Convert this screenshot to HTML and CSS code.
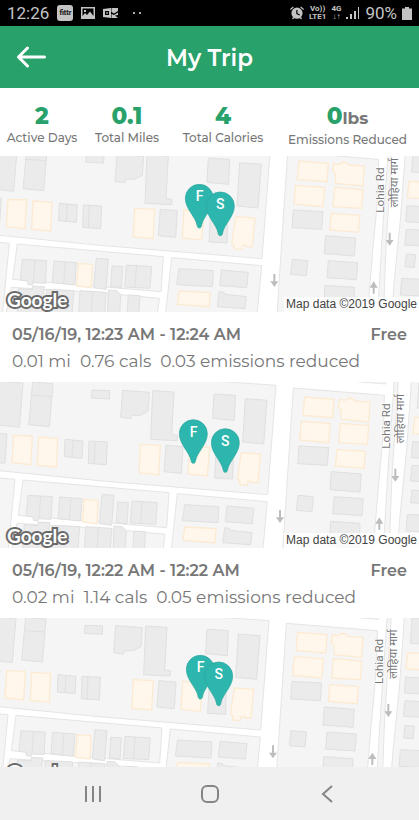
FILE: index.html
```html
<!DOCTYPE html>
<html lang="en">
<head>
<meta charset="utf-8">
<meta name="viewport" content="width=device-width, initial-scale=1">
<title>My Trip</title>
<link rel="stylesheet" href="styles.css">
</head>
<body>

<!-- Shared drawings: street map and pin -->
<svg class="defs" width="0" height="0" aria-hidden="true">
  <symbol id="pin" overflow="visible">
    <path class="pin-shape" d="M0 0C-5 0-6-3-7-9C-11-33-42-57-42-89A42 42 0 0 1 42-89C42-57 11-33 7-9C6-3 5 0 0 0Z"/>
  </symbol>
  <symbol id="streets" overflow="visible">
    <g class="block">
      <path d="M-40-20H640L640-2L811 10L786 338L630 325L300 298L0 268L-40 265Z"/>
      <path d="M863 18L1136 40Q1134 170 1122 272Q1112 380 1102 520H830Z"/>
      <path d="M940-10L1140 6V-10Z"/>
      <path d="M1166-6H1178L1158 300L1150 520H1132L1146 280Z"/>
      <path d="M1218-10L1202 212L1182 412L1174 520H1320V-10Z"/>
      <path d="M-40 286L28 292L6 520H-40Z"/>
      <path d="M52 294L490 332L483 437L38 400Z"/>
      <path d="M34 424L300 440L478 457L470 520H14Z"/>
      <path d="M515 335L785 359L770 520H495Z"/>
    </g>
    <g transform="translate(0 12)">
      <g class="house">
        <path d="M-30-14L52-9L41 124L-30 116ZM81-12L142-7L131 122L69 116ZM78 28L138 32"/>
        <path d="M259 12L312 14L311 39L257 36ZM351 13L431 19L427 76L404 88L377 88L375 98L345 94Z"/>
        <path d="M441 14L505 18L498 146L516 148L514 164L435 160Z"/>
        <path d="M-20 141L4 144L-2 231H-20Z"/>
        <path d="M178 160L232 165L229 217L176 212ZM202 162L199 215"/>
        <path d="M250 165L305 168L302 236L248 232ZM268 166L265 233"/>
        <path d="M481 178L532 182L527 262L475 257Z"/>
        <path d="M67 328L140 332L136 400L98 398L97 405L83 403V393L61 390ZM105 330L100 398"/>
        <path d="M162 333L229 338L224 405L157 398ZM196 335L191 402"/>
        <path d="M289 325L325 328L318 418L281 413ZM336 348L368 350L364 413L332 410Z"/>
        <path d="M379 345L455 350L450 415L374 411ZM410 347L404 413"/>
        <path d="M98 408L133 410L130 430L124 510H50L56 416L97 419Z"/>
        <path d="M140 418L222 422L215 510H135ZM240 422L318 427L313 510H235ZM278 424L273 510"/>
        <path d="M325 420L350 422L362 435L358 510H322ZM385 435L420 437L415 510H380Z"/>
        <path d="M537 356L640 362L637 410L530 404Z"/>
      </g>
      <g class="shop">
        <path d="M24 148L80 150L75 236L19 230ZM99 153L156 157L152 243L95 238Z"/>
        <path d="M404 175L464 178L459 266L400 261ZM552 180L612 184L605 270L547 264Z"/>
        <path d="M235 340L277 343L274 413L230 408ZM537 423L631 428L628 470L532 463Z"/>
      </g>
    </g>
    <g transform="translate(627 12)">
      <g class="house">
        <path d="M-2 24L62 28L59 103L-6 97ZM92 38L157 43L147 174L84 168ZM4 201L56 204L54 279L0 276Z"/>
        <path d="M37 360L118 367L113 413L32 407ZM30 425L45 427L47 433L112 440L108 476L25 470Z"/>
        <path d="M253 180L342 185L338 238L249 233ZM350 257L440 264L436 318L346 311Z"/>
        <path d="M250 328L296 332L292 377L245 373ZM358 332L446 338L442 389L354 383ZM348 406L436 412L434 486L344 480Z"/>
        <path d="M613-10H680V70L608 66ZM594 167L680 172V220L590 215ZM592 238L680 243V290L587 285Z"/>
        <path d="M592 312L620 314L616 352L588 350ZM578 385L680 390V440L574 435Z"/>
      </g>
      <g class="shop">
        <path d="M80 200L138 204L130 290L112 290L111 286L100 286L98 298L75 296V283L68 280Z"/>
        <path d="M270 33L358 40L354 95L265 88ZM260 106L347 112L342 170L255 162Z"/>
        <path d="M375 40L392 43Q400 32 416 40L420 45L466 48L462 108L380 100L378 68L370 65Z"/>
        <path d="M377 112L462 119L458 175L372 170ZM367 190L452 196L448 247L362 240ZM600 94L680 97V148L595 143Z"/>
      </g>
      <g class="direction">
        <path d="M193 372H199V394H208L196 411L184 394H193Z"/>
        <path d="M539 248H545V270H554L542 287L530 270H539Z"/>
        <path d="M491 431H497V413H506L494 394L482 413H491Z"/>
      </g>
      <text class="road" transform="translate(525 188) rotate(-90)">Lohia Rd</text>
      <text class="road" transform="translate(568 172) rotate(-90)">लोहिया मार्ग</text>
    </g>
  </symbol>
</svg>

<div class="status-bar">
  <div class="status-side">
    <span class="clock">12:26</span>
    <span class="app-badge">fittr</span>
    <svg class="status-icon" width="14" height="12" viewBox="0 0 14 12" aria-hidden="true"><path fill-rule="evenodd" d="M0 0H14V12H0ZM1.500 1.500V9L4 6L6 8L9 4.500L12.500 9V1.500ZM3 3H5V5H3Z"/></svg>
    <svg class="status-icon" width="16" height="12" viewBox="0 0 16 12" aria-hidden="true"><path fill-rule="evenodd" d="M0 2L8 1V11L0 10ZM2 4V8H6V4ZM3.200 5.200H4.800V6.800H3.200Z"/><path d="M8.500 1H15V4L11 6.500L8.500 5ZM8.500 7L11 8L15 5.500V8L12 8.500L15 11H8.500Z"/></svg>
    <span class="dots" aria-hidden="true"><i></i><i></i></span>
  </div>
  <div class="status-side right">
    <svg class="status-icon" width="14" height="14" viewBox="0 0 14 14" aria-hidden="true"><path fill-rule="evenodd" d="M7 1.600A5.600 5.600 0 1 1 7 12.800A5.600 5.600 0 0 1 7 1.600ZM6.300 4V8L9.500 9.500L10 8.500L7.500 7.200V4Z"/><path d="M0 3L3 .5L3.700 1.400L.8 4ZM14 3L11 .5L10.300 1.400L13.200 4ZM2 12L3.500 11L4.300 12L2.800 13.500ZM12 12L10.500 11L9.700 12L11.200 13.500Z"/></svg>
    <span class="network"><span>Vo))</span><span>LTE1</span></span>
    <span class="network"><span>4G</span><span>↓↑</span></span>
    <svg class="status-icon" width="14" height="12" viewBox="0 0 14 12" aria-hidden="true"><path d="M0 10H2V12H0ZM4 7H6V12H4ZM8 4H10V12H8ZM12 0H13V12H12Z"/></svg>
    <span class="charge">90%</span>
    <svg class="status-icon" width="10" height="13" viewBox="0 0 10 13" aria-hidden="true"><path d="M3 0H7V1.500H10V13H0V1.500H3Z"/></svg>
  </div>
</div>

<header class="app-bar">
  <button class="back" type="button" aria-label="Back">
    <svg width="30" height="22" viewBox="0 0 30 22" aria-hidden="true"><path d="M28.500 11H3M11.500 2L2.500 11L11.500 20"/></svg>
  </button>
  <h1>My Trip</h1>
</header>

<dl class="stats">
  <div><dt>Active Days</dt><dd>2</dd></div>
  <div><dt>Total Miles</dt><dd>0.1</dd></div>
  <div><dt>Total Calories</dt><dd>4</dd></div>
  <div><dt>Emissions Reduced</dt><dd>0<small>lbs</small></dd></div>
</dl>

<main class="trips">
  <article class="trip">
    <div class="map">
      <svg viewBox="0 0 1257 498" preserveAspectRatio="xMidYMid slice" aria-hidden="true">
        <use href="#streets"/>
        <use href="#pin" x="598" y="246"/><text class="pin-letter" x="599" y="166">F</text>
        <use href="#pin" x="661" y="269"/><text class="pin-letter" x="661" y="189">S</text>
      </svg>
      <span class="brand">Google</span>
      <span class="credit">Map data ©2019 Google</span>
    </div>
    <div class="summary">
      <h2>05/16/19, 12:23 AM - 12:24 AM</h2><strong>Free</strong>
      <p><span>0.01 mi</span><span>0.76 cals</span><span>0.03 emissions reduced</span></p>
    </div>
  </article>

  <article class="trip">
    <div class="map">
      <svg viewBox="0 0 1257 498" preserveAspectRatio="xMidYMid slice" aria-hidden="true">
        <use href="#streets" x="17"/>
        <use href="#pin" x="580" y="244"/><text class="pin-letter" x="581" y="164">F</text>
        <use href="#pin" x="676" y="271"/><text class="pin-letter" x="676" y="191">S</text>
      </svg>
      <span class="brand">Google</span>
      <span class="credit">Map data ©2019 Google</span>
    </div>
    <div class="summary">
      <h2>05/16/19, 12:22 AM - 12:22 AM</h2><strong>Free</strong>
      <p><span>0.02 mi</span><span>1.14 cals</span><span>0.05 emissions reduced</span></p>
    </div>
  </article>

  <article class="trip">
    <div class="map">
      <svg viewBox="0 0 1257 498" preserveAspectRatio="xMidYMid slice" aria-hidden="true">
        <use href="#streets" x="-4" y="-2"/>
        <use href="#pin" x="601" y="243"/><text class="pin-letter" x="602" y="163">F</text>
        <use href="#pin" x="656" y="263"/><text class="pin-letter" x="656" y="183">S</text>
      </svg>
      <span class="brand">Google</span>
      <span class="credit">Map data ©2019 Google</span>
    </div>
  </article>
</main>

<nav class="system-nav">
  <button type="button" aria-label="Recent apps"><svg width="20" height="20" viewBox="0 0 20 20" aria-hidden="true"><path d="M3 2V18M10 2V18M17 2V18"/></svg></button>
  <button type="button" aria-label="Home"><svg width="20" height="20" viewBox="0 0 20 20" aria-hidden="true"><rect x="2" y="2" width="16" height="16" rx="5"/></svg></button>
  <button type="button" aria-label="Go back"><svg width="20" height="20" viewBox="0 0 20 20" aria-hidden="true"><path d="M15 2L6 10L15 18"/></svg></button>
</nav>

</body>
</html>
```
FILE: styles.css
```css
* { box-sizing: border-box; }

body {
  margin: 0;
  height: 100vh;
  display: flex;
  flex-direction: column;
  overflow: hidden;
  background: #fff;
  color: #777;
  font-family: Montserrat, Inter, sans-serif;
}

h1, h2, p, dl, dd { margin: 0; }

button {
  padding: 0;
  border: 0;
  background: none;
  display: grid;
  place-items: center;
}

.defs { position: absolute; }

/* Status bar */
.status-bar {
  flex: none;
  height: 26px;
  padding: 0 7px;
  display: flex;
  justify-content: space-between;
  background: #000;
  color: #c4c4c4;
  font-family: Roboto, sans-serif;
  font-size: 17px;
}
.status-side { display: flex; align-items: center; gap: 8px; }
.status-side.right { gap: 5px; }
.status-icon { fill: currentColor; }
.app-badge {
  width: 16px;
  height: 16px;
  border-radius: 3px;
  background: #c4c4c4;
  color: #222;
  font-size: 7px;
  font-weight: 900;
  line-height: 16px;
  text-align: center;
}
.dots { display: flex; gap: 4px; padding-left: 6px; }
.dots i { width: 2px; height: 2px; background: #aaa; }
.network {
  display: grid;
  font-size: 8px;
  font-weight: 700;
  line-height: 8px;
  text-align: center;
}

/* Title bar */
.app-bar {
  flex: none;
  height: 62px;
  padding: 0 16px;
  display: grid;
  grid-template-columns: 30px 1fr 30px;
  align-items: center;
  background: #29a16b;
  color: #fff;
}
.app-bar h1 {
  padding-top: 2px;
  font-size: 23px;
  font-weight: 600;
  line-height: 28px;
  text-align: center;
}
.back svg {
  fill: none;
  stroke: #fff;
  stroke-width: 3;
  stroke-linecap: round;
  stroke-linejoin: round;
}

/* Totals */
.stats {
  flex: none;
  height: 68px;
  padding-top: 14px;
  display: grid;
  grid-template-columns: 84fr 86fr 106fr 143fr;
  text-align: center;
}
.stats div { display: flex; flex-direction: column-reverse; justify-content: flex-end; }
.stats dt { font-size: 12px; font-weight: 500; line-height: 16px; white-space: nowrap; }
.stats dd { color: #29a16b; font-size: 23px; font-weight: 800; line-height: 28px; }
.stats small { color: #777; font-size: 17px; font-weight: 700; }

/* Trip list, scrolled slightly under the totals */
.trips { flex: 1; min-height: 0; overflow: hidden; }
.trip:first-child { margin-top: -10px; }

.map { position: relative; height: 166px; overflow: hidden; background: #fff; }
.map > svg { display: block; width: 100%; height: 100%; }
.block { fill: #f5f5f5; stroke: #e5e5e5; stroke-width: 3; }
.house { fill: #ebebeb; stroke: #e0e0e0; stroke-width: 3; }
.shop { fill: #fff7eb; stroke: #fcead2; stroke-width: 4; }
.direction { fill: #bdbdbd; }
.road {
  fill: #777;
  stroke: #fff;
  stroke-width: 4;
  paint-order: stroke;
  font-family: Roboto, "Noto Sans Devanagari", "Noto Sans", sans-serif;
  font-size: 35px;
}
.pin-shape { fill: #2db6ad; stroke: #2aa59d; stroke-width: 2; }
.pin-letter {
  fill: #fff;
  font-family: Roboto, sans-serif;
  font-size: 42px;
  font-weight: 500;
  text-anchor: middle;
}
.brand {
  position: absolute;
  left: 7px;
  bottom: 0;
  color: #fff;
  font-family: Lato, sans-serif;
  font-size: 19px;
  font-weight: 700;
  line-height: 24px;
  -webkit-text-stroke: 4px #6a6a6a;
  paint-order: stroke fill;
  stroke-linejoin: round;
}
.credit {
  position: absolute;
  right: 0;
  bottom: 0;
  padding: 0 2px;
  background: rgba(255, 255, 255, .75);
  color: #444;
  font-family: "Liberation Sans", sans-serif;
  font-size: 12px;
  line-height: 15px;
}

.summary {
  padding: 11px 12px 7px;
  display: grid;
  grid-template-columns: 1fr auto;
}
.summary h2, .summary strong { font-size: 16px; font-weight: 600; line-height: 24px; }
.summary p {
  grid-column: 1 / -1;
  display: flex;
  gap: 9px;
  font-size: 17px;
  line-height: 28px;
  white-space: nowrap;
}

/* Navigation bar */
.system-nav {
  flex: none;
  height: 53px;
  padding: 0 34px;
  display: grid;
  grid-template-columns: repeat(3, 1fr);
  background: #f0f0f0;
}
.system-nav svg { fill: none; stroke: #858585; stroke-width: 2; }
```
